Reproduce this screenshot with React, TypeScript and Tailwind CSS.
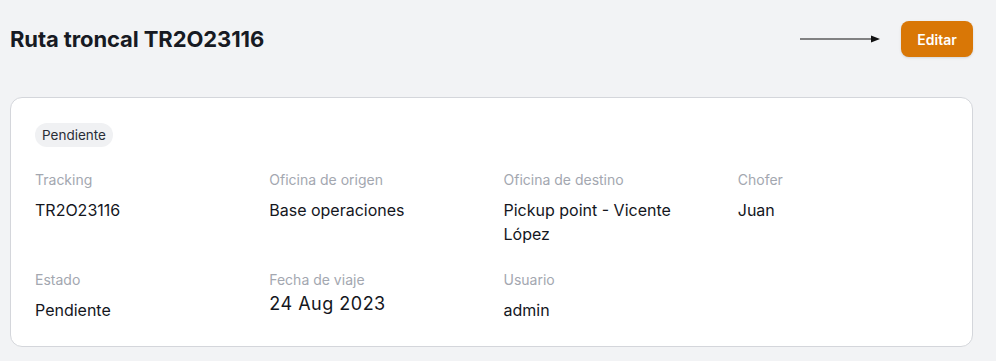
import React from 'react';

const fields = [
  { label: 'Tracking', value: 'TR2O23116' },
  { label: 'Oficina de origen', value: 'Base operaciones' },
  { label: 'Oficina de destino', value: 'Pickup point - Vicente López' },
  { label: 'Chofer', value: 'Juan' },
  { label: 'Estado', value: 'Pendiente' },
  { label: 'Fecha de viaje', value: '24 Aug 2023', large: true },
  { label: 'Usuario', value: 'admin' },
];

export default function App() {
  return (
    <div className="min-h-[361px] w-[996px] bg-[#f2f3f5] px-[10px] pt-[21px] font-['Inter',sans-serif] text-[#171a23]">
      <div className="flex w-[963px] items-center justify-between">
        <h1 className="text-[22px] font-bold tracking-[-0.1px]">Ruta troncal TR2O23116</h1>
        <div className="flex items-center gap-[20px]">
          <svg width="81" height="10" viewBox="0 0 81 10">
            <line x1="0" y1="5" x2="73" y2="5" stroke="#111" strokeWidth="1.2" />
            <path d="M71 1.5 L80 5 L71 8.5 Z" fill="#111" />
          </svg>
          <button className="h-[36px] w-[72px] rounded-lg bg-[#d97706] text-[14px] font-semibold text-white shadow-sm">
            Editar
          </button>
        </div>
      </div>

      <div className="mt-[40px] w-[963px] rounded-xl border border-[#d4d6db] bg-white p-6">
        <span className="inline-block rounded-full bg-[#f0f1f3] px-[7px] py-[2px] text-[13.5px] leading-5 text-[#2a2d36]">
          Pendiente
        </span>
        <div className="mt-[23px] grid grid-cols-4 gap-x-6 gap-y-6">
          {fields.map((f) => (
            <div key={f.label} className={f.large ? 'flex flex-col gap-[3px]' : 'flex flex-col gap-[8px]'}>
              <span className="text-[14px] leading-5 text-[#a3a7b0]">{f.label}</span>
              <span
                className={
                  f.large
                    ? 'text-[18px] leading-[22px] tracking-[0.5px] text-[#14161d]'
                    : 'text-[16px] leading-[24px] text-[#14161d]'
                }
              >
                {f.value}
              </span>
            </div>
          ))}
        </div>
      </div>
    </div>
  );
}
